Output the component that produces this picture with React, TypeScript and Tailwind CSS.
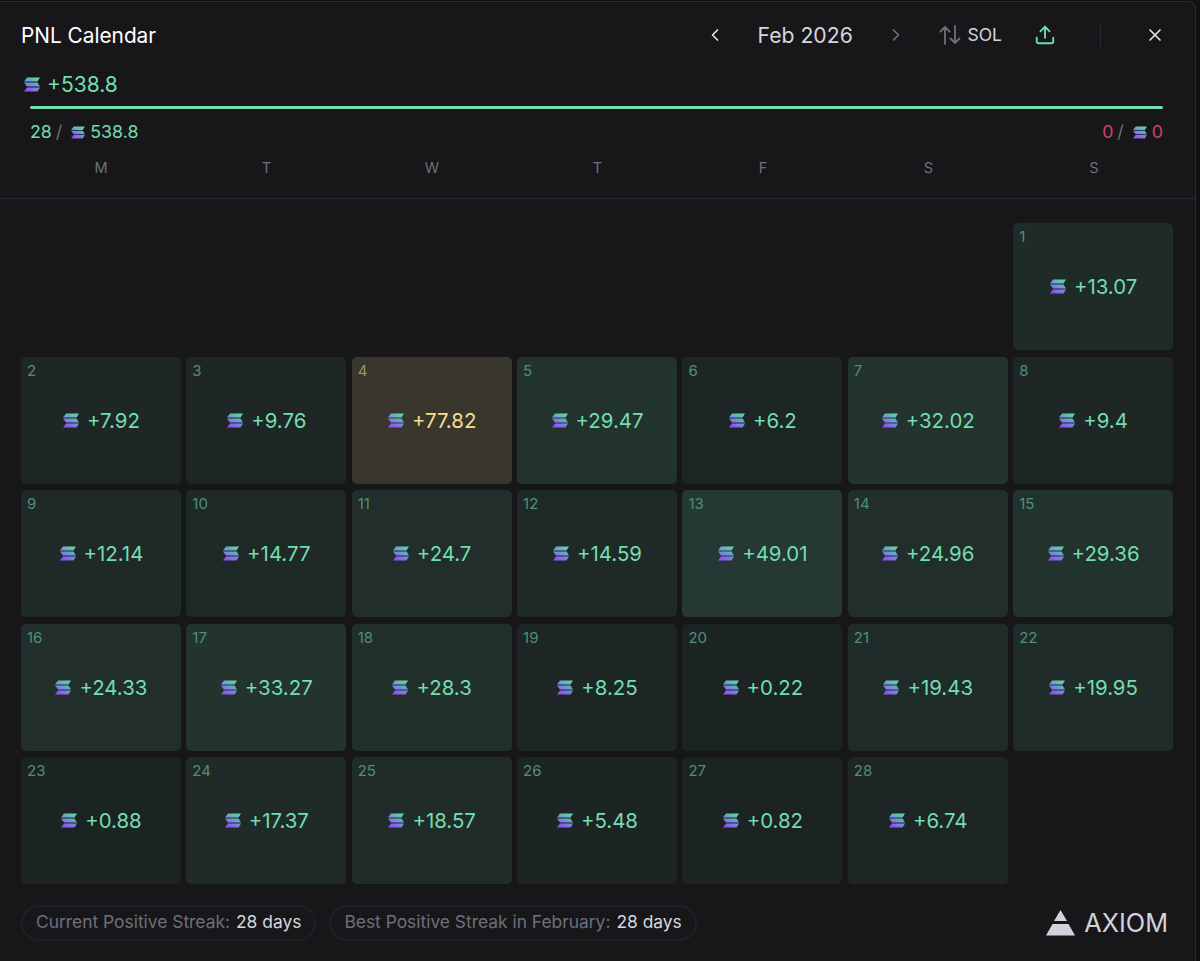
import { useId } from 'react';
import { ChevronLeft, ChevronRight, Upload, X } from 'lucide-react';

// bg follows the size of the day's gain
const DAYS = [
  { day: 1, pnl: '+13.07', bg: 'bg-[#1f2b28]', col: 'col-start-7' },
  { day: 2, pnl: '+7.92', bg: 'bg-[#1e2725]' },
  { day: 3, pnl: '+9.76', bg: 'bg-[#1e2725]' },
  { day: 4, pnl: '+77.82', bg: 'bg-[#39372d]', gold: true },
  { day: 5, pnl: '+29.47', bg: 'bg-[#22322d]' },
  { day: 6, pnl: '+6.2', bg: 'bg-[#1d2625]' },
  { day: 7, pnl: '+32.02', bg: 'bg-[#23332e]' },
  { day: 8, pnl: '+9.4', bg: 'bg-[#1e2725]' },
  { day: 9, pnl: '+12.14', bg: 'bg-[#1f2927]' },
  { day: 10, pnl: '+14.77', bg: 'bg-[#1f2a28]' },
  { day: 11, pnl: '+24.7', bg: 'bg-[#212e2b]' },
  { day: 12, pnl: '+14.59', bg: 'bg-[#1f2a28]' },
  { day: 13, pnl: '+49.01', bg: 'bg-[#263833]' },
  { day: 14, pnl: '+24.96', bg: 'bg-[#212e2b]' },
  { day: 15, pnl: '+29.36', bg: 'bg-[#22322d]' },
  { day: 16, pnl: '+24.33', bg: 'bg-[#212e2b]' },
  { day: 17, pnl: '+33.27', bg: 'bg-[#23332e]' },
  { day: 18, pnl: '+28.3', bg: 'bg-[#22302c]' },
  { day: 19, pnl: '+8.25', bg: 'bg-[#1d2625]' },
  { day: 20, pnl: '+0.22', bg: 'bg-[#1b2323]' },
  { day: 21, pnl: '+19.43', bg: 'bg-[#202c29]' },
  { day: 22, pnl: '+19.95', bg: 'bg-[#202c29]' },
  { day: 23, pnl: '+0.88', bg: 'bg-[#1b2323]' },
  { day: 24, pnl: '+17.37', bg: 'bg-[#202b29]' },
  { day: 25, pnl: '+18.57', bg: 'bg-[#202c29]' },
  { day: 26, pnl: '+5.48', bg: 'bg-[#1c2524]' },
  { day: 27, pnl: '+0.82', bg: 'bg-[#1b2323]' },
  { day: 28, pnl: '+6.74', bg: 'bg-[#1d2625]' },
];

const WEEKDAYS = ['M', 'T', 'W', 'T', 'F', 'S', 'S'];

function SolIcon({ className }: { className: string }) {
  const id = useId();
  return (
    <svg className={className} viewBox="0 0 16 15" aria-hidden="true">
      <defs>
        <linearGradient id={id} x1="0.2" y1="1" x2="0.8" y2="0">
          <stop offset="0" stopColor="#9945ff" />
          <stop offset="0.5" stopColor="#6f93d6" />
          <stop offset="1" stopColor="#5fd6a4" />
        </linearGradient>
      </defs>
      <path fill={`url(#${id})`} d="M3 0.5H16L13.500 4.500H0Z M0 5.500H13.500L16 9.500H3Z M3 10.500H16L13.500 14.500H0Z" />
    </svg>
  );
}

function DayCell({ day, pnl, bg, col, gold }: { day: number; pnl: string; bg: string; col?: string; gold?: boolean }) {
  return (
    <div className={`relative flex h-[127px] items-center justify-center rounded-[5px] ${bg} ${col ?? ''}`}>
      <span className={`absolute left-[6px] top-[5px] text-[15px] leading-[17px] ${gold ? 'text-[#a0926a]' : 'text-[#4f8f78]'}`}>{day}</span>
      <div className={`flex items-center gap-[8px] pl-[1px] text-[20.4px] leading-[24px] ${gold ? 'text-[#f9dc8c]' : 'text-[#72deaf]'}`}>
        <SolIcon className="h-[15px] w-[16px]" />
        <span className="pt-[1px]">{pnl}</span>
      </div>
    </div>
  );
}

function Pill({ label, value }: { label: string; value: string }) {
  return (
    <div className="flex h-[36px] items-center whitespace-nowrap rounded-full border-2 border-[#1f1f25] px-[13px] text-[17.4px] text-[#6f6f7b]">
      {label}
      <span className="ml-[6px] text-[#d6d6de]">{value}</span>
    </div>
  );
}

export default function App() {
  return (
    <div className="h-[961px] w-[1200px] overflow-hidden bg-[#111113] font-['Inter',sans-serif]">
      <div className="mr-[4px] mt-px h-[961px] rounded-tr-[8px] border-r border-t border-[#2a2a33] bg-[#17171a]">
        <header className="h-[197px] border-b border-[#26262e] px-[21px]">
          <div className="flex h-[67px] items-center">
            <h1 className="pt-[1px] text-[20.8px] font-normal text-white">PNL Calendar</h1>
            <div className="ml-auto flex items-center">
              <ChevronLeft className="h-[20px] w-[20px] text-[#e4e4ea]" strokeWidth={2} />
              <span className="ml-[32px] w-[95px] whitespace-nowrap text-[21.2px] text-[#d6d6de]">Feb 2026</span>
              <ChevronRight className="ml-[34px] h-[20px] w-[20px] text-[#6f6f7b]" strokeWidth={2} />
              <svg className="ml-[33px] h-[22px] w-[22px] text-[#6f6f7b]" viewBox="0 0 22 22" fill="none" stroke="currentColor" strokeWidth="1.8" strokeLinecap="round" strokeLinejoin="round">
                <path d="M6 20V3M1.500 7.500 6 3l4.500 4.500M16 2v17M11.500 14.500 16 19l4.500-4.500" />
              </svg>
              <span className="ml-[6px] text-[17.5px] text-[#d6d6de]">SOL</span>
              <Upload className="ml-[32px] h-[22px] w-[22px] text-[#72deaf]" strokeWidth={2} />
              <div className="ml-[44px] h-[24px] w-px bg-[#26262e]" />
              <X className="ml-[44px] mr-[9px] h-[20px] w-[20px] text-[#e4e4ea]" strokeWidth={2} />
            </div>
          </div>
          <div className="mt-[4px] flex h-[23px] items-center gap-[7px] pl-[3px] text-[21px] text-[#72deaf]">
            <SolIcon className="h-[15px] w-[16px]" />
            <span>+538.8</span>
          </div>
          <div className="ml-[9px] mr-[11px] mt-[10px] h-[3px] rounded-full bg-[#72deaf]" />
          <div className="ml-[9px] mr-[11px] mt-[11px] flex h-[24px] items-center justify-between text-[17.8px]">
            <div className="flex items-center text-[#72deaf]">
              28<span className="ml-[4px] mr-[9px] text-[#6f6f7b]">/</span>
              <SolIcon className="mr-[5px] h-[13px] w-[14px]" />
              538.8
            </div>
            <div className="flex items-center text-[#d6406f]">
              0<span className="ml-[4px] mr-[9px] text-[#6f6f7b]">/</span>
              <SolIcon className="mr-[5px] h-[13px] w-[14px]" />
              0
            </div>
          </div>
          <div className="mt-[13px] grid grid-cols-7 gap-x-[5.5px] text-center text-[14.5px] text-[#6f6f7b]">
            {WEEKDAYS.map((d, i) => (
              <span key={i}>{d}</span>
            ))}
          </div>
        </header>

        <main className="grid grid-cols-7 gap-x-[5.5px] gap-y-[6.5px] pl-[21px] pr-[22px] pt-[24px]">
          {DAYS.map((d) => (
            <DayCell key={d.day} {...d} />
          ))}
        </main>

        <footer className="flex items-center pl-[21px] pr-[27px] pt-[20.5px]">
          <div className="flex gap-[13px]">
            <Pill label="Current Positive Streak:" value="28 days" />
            <Pill label="Best Positive Streak in February:" value="28 days" />
          </div>
          <div className="ml-auto flex items-center gap-[9px] text-[#d2d2da]">
            <svg className="h-[26px] w-[29px]" viewBox="0 0 29 26" fill="currentColor" aria-hidden="true">
              <path d="M14.500 0 21 11H8Z M6.500 14H22.500L29 25.500H0Z" />
            </svg>
            <span className="text-[25.3px] leading-[30px]">AXIOM</span>
          </div>
        </footer>
      </div>
    </div>
  );
}
